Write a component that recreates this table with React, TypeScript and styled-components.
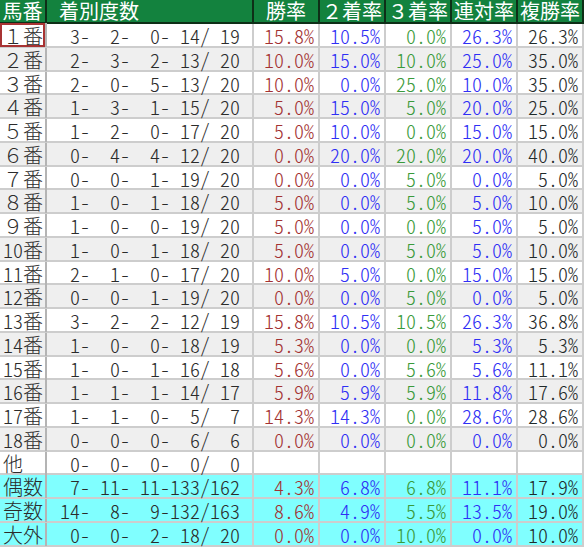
import React from "react";
import styled, { createGlobalStyle, css } from "styled-components";

const Global = createGlobalStyle`
  html, body { margin: 0; padding: 0; background: #ffffff; }
  body {
    font-family: "Noto Sans CJK JP", "Noto Sans", sans-serif;
  }
`;

type Tone = "white" | "gray" | "cyan";

const COLS = "47px 207px repeat(5, 66px)";

const Table = styled.div`
  width: 584px;
  display: flex;
  flex-direction: column;
  font-size: 20px;
  font-weight: 300;
`;

const HeadRow = styled.div`
  display: grid;
  grid-template-columns: ${COLS};
  height: 24px;
  background: #13823e;
  border-bottom: 2px solid #0e2f17;
  box-sizing: border-box;
`;

const HeadCell = styled.div<{ $align?: "left" | "center" }>`
  color: #ffffff;
  font-weight: 400;
  line-height: 22px;
  border-right: 2px solid #0e2f17;
  box-sizing: border-box;
  white-space: nowrap;
  text-align: ${(p) => (p.$align === "left" ? "left" : "center")};
  padding-left: ${(p) => (p.$align === "left" ? "12px" : "0")};
`;

const bg: Record<Tone, string> = {
  white: "#ffffff",
  gray: "#efefef",
  cyan: "#80ffff",
};

const Row = styled.div<{ $tone: Tone }>`
  display: grid;
  grid-template-columns: ${COLS};
  height: 23.75px;
  background: ${(p) => bg[p.$tone]};
  border-bottom: 2px solid #cdcdcd;
  box-sizing: border-box;
`;

const Half = styled.span`
  font-feature-settings: "hwid" 1;
`;

const LabelCell = styled.div<{ $selected?: boolean }>`
  color: #2b2b2b;
  line-height: 22px;
  padding: 1px 0 0 3px;
  border-right: 2px solid #b4b4b4;
  box-sizing: border-box;
  white-space: nowrap;
  ${(p) =>
    p.$selected &&
    css`
      box-shadow: inset 0 0 0 2px #a83333;
      margin-top: -1px;
      padding-top: 2px;
    `}
`;

const CountCell = styled.div`
  display: flex;
  align-items: flex-start;
  padding: 1px 0 0 3px;
  color: #2b2b2b;
  line-height: 22px;
  border-right: 2px solid #cdcdcd;
  box-sizing: border-box;
  white-space: nowrap;
  font-feature-settings: "hwid" 1;
`;

const Num = styled.span`
  display: inline-block;
  width: 30px;
  text-align: right;
`;

const Sep = styled.span`
  display: inline-block;
  width: 10px;
  text-align: center;
`;

type Kind = "win" | "second" | "third" | "rentai" | "fuku";

const tint: Record<Kind, string> = {
  win: "#a33232",
  second: "#2f2ff5",
  third: "#3a9a3a",
  rentai: "#2f2ff5",
  fuku: "#1f2a2a",
};

const PctCell = styled.div<{ $kind: Kind }>`
  color: ${(p) => tint[p.$kind]};
  line-height: 22px;
  padding: 1px 4px 0 0;
  text-align: right;
  border-right: 2px solid #cdcdcd;
  box-sizing: border-box;
  white-space: nowrap;
  font-feature-settings: "hwid" 1;
`;

type Data = string[];

const rows: Data[] = [
  ["１番", "3", "2", "0", "14", "19", "15.8%", "10.5%", "0.0%", "26.3%", "26.3%"],
  ["２番", "2", "3", "2", "13", "20", "10.0%", "15.0%", "10.0%", "25.0%", "35.0%"],
  ["３番", "2", "0", "5", "13", "20", "10.0%", "0.0%", "25.0%", "10.0%", "35.0%"],
  ["４番", "1", "3", "1", "15", "20", "5.0%", "15.0%", "5.0%", "20.0%", "25.0%"],
  ["５番", "1", "2", "0", "17", "20", "5.0%", "10.0%", "0.0%", "15.0%", "15.0%"],
  ["６番", "0", "4", "4", "12", "20", "0.0%", "20.0%", "20.0%", "20.0%", "40.0%"],
  ["７番", "0", "0", "1", "19", "20", "0.0%", "0.0%", "5.0%", "0.0%", "5.0%"],
  ["８番", "1", "0", "1", "18", "20", "5.0%", "0.0%", "5.0%", "5.0%", "10.0%"],
  ["９番", "1", "0", "0", "19", "20", "5.0%", "0.0%", "0.0%", "5.0%", "5.0%"],
  ["10番", "1", "0", "1", "18", "20", "5.0%", "0.0%", "5.0%", "5.0%", "10.0%"],
  ["11番", "2", "1", "0", "17", "20", "10.0%", "5.0%", "0.0%", "15.0%", "15.0%"],
  ["12番", "0", "0", "1", "19", "20", "0.0%", "0.0%", "5.0%", "0.0%", "5.0%"],
  ["13番", "3", "2", "2", "12", "19", "15.8%", "10.5%", "10.5%", "26.3%", "36.8%"],
  ["14番", "1", "0", "0", "18", "19", "5.3%", "0.0%", "0.0%", "5.3%", "5.3%"],
  ["15番", "1", "0", "1", "16", "18", "5.6%", "0.0%", "5.6%", "5.6%", "11.1%"],
  ["16番", "1", "1", "1", "14", "17", "5.9%", "5.9%", "5.9%", "11.8%", "17.6%"],
  ["17番", "1", "1", "0", "5", "7", "14.3%", "14.3%", "0.0%", "28.6%", "28.6%"],
  ["18番", "0", "0", "0", "6", "6", "0.0%", "0.0%", "0.0%", "0.0%", "0.0%"],
  ["他", "0", "0", "0", "0", "0", "", "", "", "", ""],
  ["偶数", "7", "11", "11", "133", "162", "4.3%", "6.8%", "6.8%", "11.1%", "17.9%"],
  ["奇数", "14", "8", "9", "132", "163", "8.6%", "4.9%", "5.5%", "13.5%", "19.0%"],
  ["大外", "0", "0", "2", "18", "20", "0.0%", "0.0%", "10.0%", "0.0%", "10.0%"],
];

const kinds: Kind[] = ["win", "second", "third", "rentai", "fuku"];

function toneFor(i: number): Tone {
  if (i >= 19) return "cyan";
  return i % 2 === 1 ? "gray" : "white";
}

function Label({ text }: { text: string }) {
  const m = text.match(/^([0-9]+)(.*)$/);
  if (!m) return <>{text}</>;
  return (
    <>
      <Half>{m[1]}</Half>
      {m[2]}
    </>
  );
}

export default function App() {
  return (
    <>
      <Global />
      <Table>
        <HeadRow>
          <HeadCell>馬番</HeadCell>
          <HeadCell $align="left">着別度数</HeadCell>
          <HeadCell>勝率</HeadCell>
          <HeadCell>２着率</HeadCell>
          <HeadCell>３着率</HeadCell>
          <HeadCell>連対率</HeadCell>
          <HeadCell>複勝率</HeadCell>
        </HeadRow>
        {rows.map((r, i) => {
          const [label, a, b, c, d, n, ...pcts] = r;
          return (
            <Row key={label} $tone={toneFor(i)}>
              <LabelCell $selected={i === 0}>
                <Label text={label} />
              </LabelCell>
              <CountCell>
                <Num>{a}</Num>
                <Sep>-</Sep>
                <Num>{b}</Num>
                <Sep>-</Sep>
                <Num>{c}</Num>
                <Sep>-</Sep>
                <Num>{d}</Num>
                <Sep>/</Sep>
                <Num>{n}</Num>
              </CountCell>
              {pcts.map((p, j) => (
                <PctCell key={j} $kind={kinds[j]}>
                  {p}
                </PctCell>
              ))}
            </Row>
          );
        })}
      </Table>
    </>
  );
}
